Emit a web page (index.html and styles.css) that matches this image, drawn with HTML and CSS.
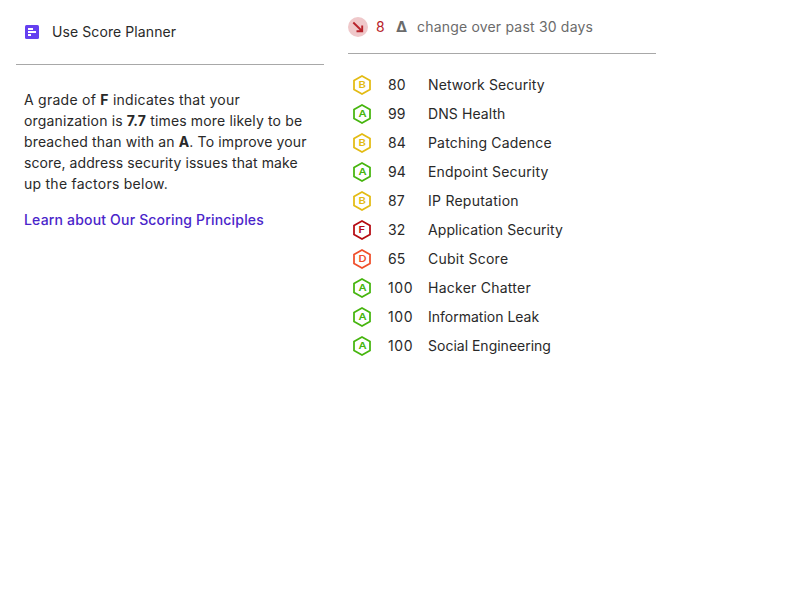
FILE: index.html
```html
<!DOCTYPE html>
<html lang="en">
<head>
<meta charset="utf-8">
<title>Score</title>
<link rel="stylesheet" href="styles.css">
</head>
<body>
<svg class="defs" width="0" height="0">
<symbol id="hex" viewBox="0 0 20 20"><path d="M10 1.1 L18 5.6 V14.4 L10 18.9 L2 14.4 V5.6 Z" fill="none" stroke="currentColor" stroke-width="1.75"/></symbol>
</svg>
<main class="layout">
<section class="column">
<div class="planner">
<svg class="planner-icon" width="16" height="16" viewBox="0 0 16 16"><rect x="1" y="1" width="14" height="14" rx="1.5" fill="#6540f0"/><path d="M4 5H9M4 8H12M4 11H7" stroke="#fff" stroke-width="2"/></svg>
<span>Use Score Planner</span>
</div>
<div class="info">
<p><span class="wider">A grade of <b>F</b> indicates that your</span> organization is <b>7.7</b> times more likely to be breached than with an <b>A</b>. To improve your <span class="tight">score, address security issues that make</span> <span class="wider">up the factors below.</span></p>
<a class="link">Learn about Our Scoring Principles</a>
</div>
</section>
<section class="column">
<div class="change">
<svg width="20" height="20" viewBox="0 0 20 20"><circle cx="10" cy="10" r="10" fill="#efc8ca"/><path d="M5.3 5.5L14 14M14.2 8.5V14.2H8.5" fill="none" stroke="#b8222a" stroke-width="1.9"/></svg>
<span class="drop">8</span><b class="delta">Δ</b><span class="period">change over past 30 days</span>
</div>
<div class="factors">
<div class="factor"><span class="grade b"><svg><use href="#hex"/></svg><i>B</i></span><span>80</span><span>Network Security</span></div>
<div class="factor"><span class="grade a"><svg><use href="#hex"/></svg><i>A</i></span><span>99</span><span>DNS Health</span></div>
<div class="factor"><span class="grade b"><svg><use href="#hex"/></svg><i>B</i></span><span>84</span><span class="wide">Patching Cadence</span></div>
<div class="factor"><span class="grade a"><svg><use href="#hex"/></svg><i>A</i></span><span>94</span><span class="wide">Endpoint Security</span></div>
<div class="factor"><span class="grade b"><svg><use href="#hex"/></svg><i>B</i></span><span>87</span><span class="wider">IP Reputation</span></div>
<div class="factor"><span class="grade f"><svg><use href="#hex"/></svg><i>F</i></span><span>32</span><span>Application Security</span></div>
<div class="factor"><span class="grade d"><svg><use href="#hex"/></svg><i>D</i></span><span>65</span><span class="wider">Cubit Score</span></div>
<div class="factor"><span class="grade a"><svg><use href="#hex"/></svg><i>A</i></span><span class="hundred">100</span><span class="wider">Hacker Chatter</span></div>
<div class="factor"><span class="grade a"><svg><use href="#hex"/></svg><i>A</i></span><span class="hundred">100</span><span class="normal">Information Leak</span></div>
<div class="factor"><span class="grade a"><svg><use href="#hex"/></svg><i>A</i></span><span class="hundred">100</span><span class="normal">Social Engineering</span></div>
</div>
</section>
</main>
</body>
</html>
```

FILE: styles.css
```css
body { margin: 0; background: #fff; color: #292929; font: 14px/21px Inter, sans-serif; letter-spacing: .09px; }
.defs { position: absolute; }
.layout { display: flex; gap: 24px; padding-left: 16px; }
.column { width: 308px; }
.planner { display: flex; align-items: center; height: 64px; padding-left: 8px; gap: 12px; border-bottom: 1px solid #a8a8a8; }
.planner span { padding-bottom: 2px; }
.info { width: 288px; padding: 24px 0 0 8px; letter-spacing: .15px; }
.info p { margin: 0 0 15px; }
.link { color: #4a25ca; font-weight: 500; letter-spacing: .18px; }
.change { display: flex; align-items: center; height: 53px; border-bottom: 1px solid #a8a8a8; color: #6b6b6b; }
.drop { margin-left: 8px; width: 20px; color: #b8222a; }
.delta { width: 21px; font-size: 15px; }
.period { letter-spacing: .19px; }
.factors { padding: 17px 0 0 4px; }
.factor { display: grid; grid-template-columns: 36px 40px 1fr; align-items: start; height: 29px; line-height: 27px; }
.tight { letter-spacing: .09px; }
.wide { letter-spacing: .18px; }
.wider { letter-spacing: .25px; }
.normal { letter-spacing: 0; }
.hundred { letter-spacing: .6px; }
.grade { display: grid; place-items: center; width: 20px; height: 20px; margin-top: 4px; }
.grade svg, .grade i { grid-area: 1 / 1; }
.grade svg { width: 20px; height: 20px; }
.grade i { font: 600 9.5px/20px Inter, sans-serif; letter-spacing: 0; transform: scaleX(1.18); }
.a { color: #46b50e; }
.b { color: #e3bb13; }
.d { color: #f04e2a; }
.f { color: #b50a12; }
```
